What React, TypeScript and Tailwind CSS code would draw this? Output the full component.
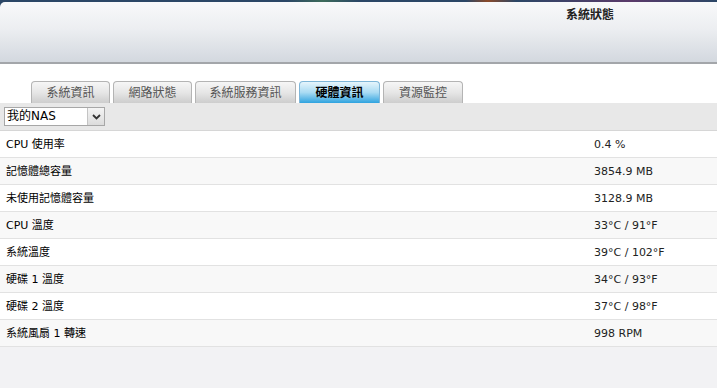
import React from "react"

const tabs = [
  { label: "系統資訊", w: "w-[79px]" },
  { label: "網路狀態", w: "w-[79px]" },
  { label: "系統服務資訊", w: "w-[101px]" },
  { label: "硬體資訊", w: "w-[81px]", active: true },
  { label: "資源監控", w: "w-[80px]" },
]

const rows = [
  ["CPU 使用率", "0.4 %"],
  ["記憶體總容量", "3854.9 MB"],
  ["未使用記憶體容量", "3128.9 MB"],
  ["CPU 溫度", "33°C / 91°F"],
  ["系統溫度", "39°C / 102°F"],
  ["硬碟 1 溫度", "34°C / 93°F"],
  ["硬碟 2 溫度", "37°C / 98°F"],
  ["系統風扇 1 轉速", "998 RPM"],
]

export default function App() {
  return (
    <div className="w-[717px] h-[388px] overflow-hidden bg-[#f2f2f4] text-[11px] text-[#222] font-['DejaVu_Sans','Noto_Sans_CJK_TC',sans-serif]">
      {/* top strip from the desktop background */}
      <div className="h-[2px] bg-[linear-gradient(90deg,#2b4766_0%,#2b4766_40%,#3c6b5a_45%,#2b4766_50%,#2b4766_65%,#8a4a2a_68%,#2b4766_72%,#5a3a6a_88%,#2b4766_100%)]" />

      {/* header */}
      <div className="bg-[#2b4766]">
        <div className="h-[62px] rounded-tl-[5px] border-b-2 border-[#a3a6aa] bg-[linear-gradient(180deg,#f8f9fa_0%,#eceef1_45%,#d3d8df_100%)]">
          <div className="pl-[566px] pt-[4px] text-[12px] font-bold text-[#222]">系統狀態</div>
        </div>
      </div>

      {/* tabs */}
      <div className="bg-white pt-[17px] pl-[31px] flex items-end gap-[3px]">
        {tabs.map((t) =>
          t.active ? (
            <div
              key={t.label}
              className={`${t.w} h-[22px] rounded-t-[4px] border border-b-0 border-[#7fb6d8] bg-[linear-gradient(180deg,#e6f5fc_0%,#a9dbf3_50%,#2fa3df_100%)] flex items-center justify-center text-[12px] font-bold text-black`}
            >
              {t.label}
            </div>
          ) : (
            <div
              key={t.label}
              className={`${t.w} h-[22px] rounded-t-[4px] border border-b-0 border-[#b4b4b4] bg-[linear-gradient(180deg,#f6f6f6_0%,#e6e6e6_50%,#cdcdcd_100%)] flex items-center justify-center text-[12px] text-[#555]`}
            >
              {t.label}
            </div>
          )
        )}
      </div>

      {/* toolbar */}
      <div className="h-[28px] bg-[#e8e8e8] border-b border-[#d6d6d6] pl-[4px] pt-[4px]">
        <div className="flex w-[101px] h-[19px] border border-[#a7a7a7] bg-white">
          <div className="flex-1 pl-[2px] leading-[17px] text-[12px] text-black">我的NAS</div>
          <div className="w-[17px] border-l border-[#c4c4c4] bg-[linear-gradient(180deg,#f4f4f4,#dcdcdc)] flex items-center justify-center">
            <svg width="9" height="6" viewBox="0 0 9 6">
              <path d="M1 1 L4.5 4.5 L8 1" stroke="#333" strokeWidth="1.8" fill="none" />
            </svg>
          </div>
        </div>
      </div>

      {/* rows */}
      <div>
        {rows.map(([k, v], i) => (
          <div
            key={k}
            className={`h-[27px] grid grid-cols-[588px_1fr] items-center px-[6px] pt-[2px] border-b border-[#e2e2e2] ${
              i % 2 === 0 ? "bg-white" : "bg-[#f8f8f8]"
            }`}
          >
            <span className="text-black">{k}</span>
            <span className="text-[#222]">{v}</span>
          </div>
        ))}
      </div>
    </div>
  )
}
